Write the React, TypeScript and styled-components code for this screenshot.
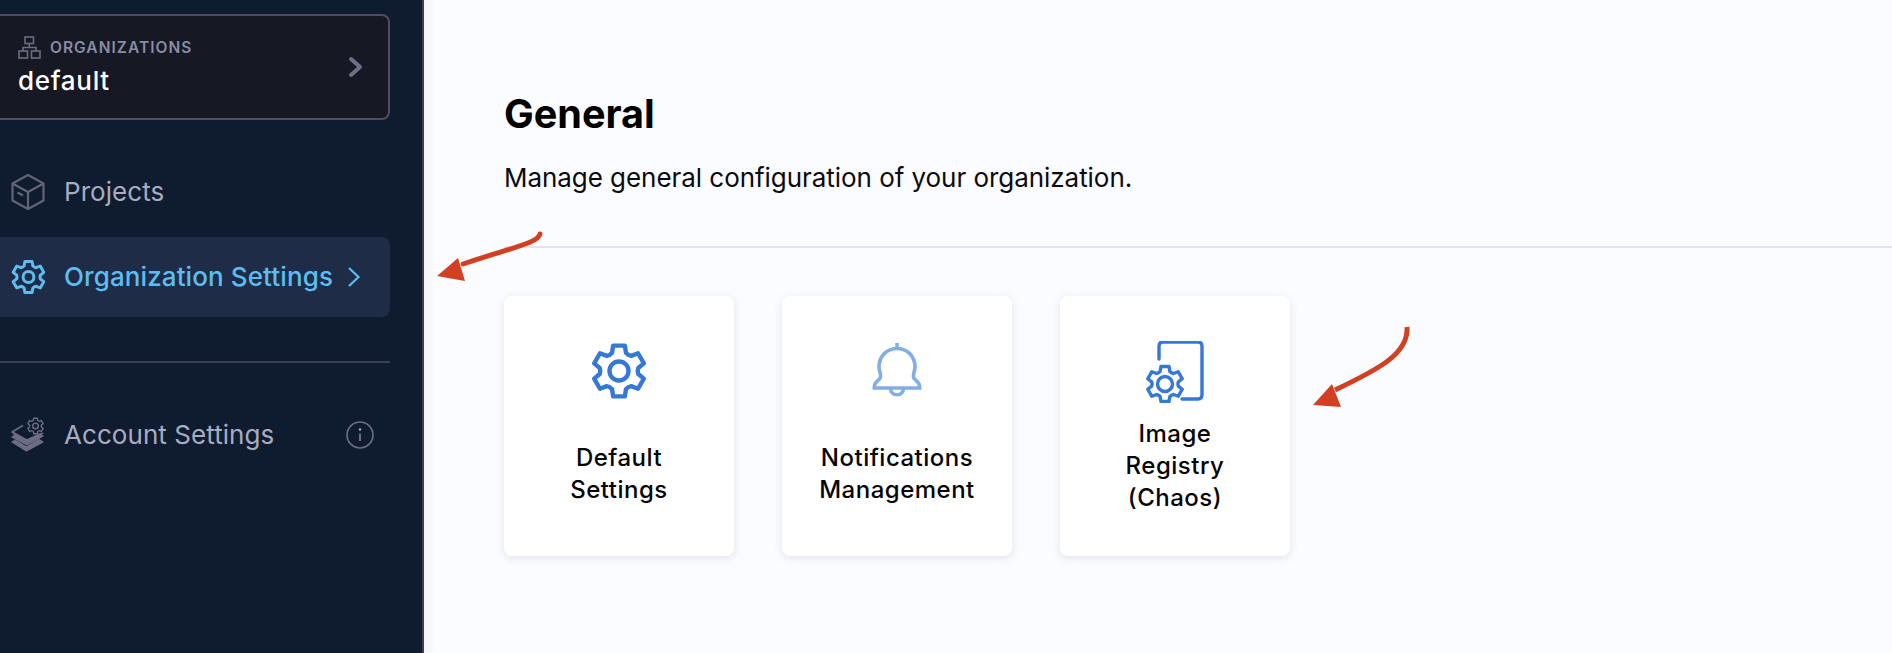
import React from 'react';
import styled, { createGlobalStyle } from 'styled-components';

/* ── helpers ───────────────────────────────────────────── */
const gearPath = (cx: number, cy: number, rO: number, rI: number) => {
  const pt = (r: number, deg: number) => {
    const a = ((deg - 90) * Math.PI) / 180;
    return `${(cx + r * Math.cos(a)).toFixed(2)} ${(cy + r * Math.sin(a)).toFixed(2)}`;
  };
  let d = '';
  for (let i = 0; i < 6; i++) {
    const a = i * 60;
    d += `${i === 0 ? 'M' : 'L'}${pt(rO, a - 13)} L${pt(rO, a + 13)} L${pt(rI, a + 21)} Q${pt(rI * 0.93, a + 30)} ${pt(rI, a + 39)} `;
  }
  return d + 'Z';
};

/* ── page ──────────────────────────────────────────────── */
const Global = createGlobalStyle`
  html, body { margin: 0; height: 100%; overflow: hidden; background: #fbfcff; }
  #root { height: 100%; }
  * { box-sizing: border-box; }
`;

const Page = styled.div`
  position: relative;
  display: flex;
  height: 653px;
  overflow: hidden;
  font-family: Inter, 'Liberation Sans', sans-serif;
`;

/* ── sidebar ───────────────────────────────────────────── */
const Sidebar = styled.aside`
  flex: 0 0 424px;
  min-width: 0;
  padding: 14px 32px 0 0;
  background: #0f1b2e;
  border-right: 2px solid #3b3f4c;
`;

const OrgBox = styled.div`
  display: flex;
  align-items: center;
  justify-content: space-between;
  height: 106px;
  margin-left: -10px;
  padding: 0 24px 1px 26px;
  background: #161823;
  border: 2px solid #4d4f5f;
  border-radius: 8px;
`;

const OrgLabel = styled.div`
  display: flex;
  align-items: center;
  gap: 9px;
  color: #8a8ca3;
  font-size: 15.5px;
  font-weight: 600;
  letter-spacing: 1.05px;
  line-height: 22px;
`;

const OrgName = styled.div`
  margin-top: 6px;
  color: #fff;
  font-size: 26px;
  font-weight: 450;
  letter-spacing: 0.7px;
  line-height: 32px;
`;

const NavRow = styled.div<{ $active?: boolean }>`
  display: flex;
  align-items: center;
  gap: 19px;
  height: 80px;
  padding: 0 16px 0 10px;
  border-radius: 0 8px 8px 0;
  background: ${(p) => (p.$active ? '#1f2c47' : 'transparent')};
  color: ${(p) => (p.$active ? '#5dbdf0' : '#a9abc0')};
  font-size: 26px;
  font-weight: ${(p) => (p.$active ? 500 : 400)};
  letter-spacing: ${(p) => (p.$active ? '0.1px' : '0.06px')};
  line-height: 32px;
`;

const NavIcon = styled.svg`
  flex: none;
  width: 35px;
  height: 38px;
`;

const NavText = styled.span`
  flex: 1;
  white-space: nowrap;
`;

const NavChevron = styled.svg`
  flex: none;
  width: 14px;
  height: 24px;
  margin: 0 13px 0 -5px;
`;

const NavList = styled.nav`
  margin-top: 32px;
  display: flex;
  flex-direction: column;
  gap: 5px;
`;

const SideRule = styled.hr`
  height: 2px;
  margin: 44px 0 32px;
  border: 0;
  background: #3b3f4f;
`;

/* ── main ──────────────────────────────────────────────── */
const Main = styled.main`
  flex: 1;
  min-width: 0;
  padding-top: 87px;
  background: linear-gradient(90deg, #f4f5fa 0, #fbfcff 12px);
`;

const Heading = styled.h1`
  margin: 0 0 0 80px;
  color: #000;
  font-size: 39.6px;
  font-weight: 700;
  line-height: 54px;
`;

const Subtitle = styled.p`
  margin: 19px 0 0 80px;
  color: #0b0b0f;
  font-size: 26px;
  font-weight: 400;
  letter-spacing: -0.05px;
  line-height: 36px;
`;

const Rule = styled.hr`
  height: 2px;
  margin: 50px 0 0 80px;
  border: 0;
  background: #e3e5eb;
`;

const Cards = styled.div`
  display: flex;
  gap: 48px;
  margin: 48px 0 0 80px;
`;

const Card = styled.div`
  width: 230px;
  height: 260px;
  padding-top: 45px;
  display: flex;
  flex-direction: column;
  align-items: center;
  background: #fff;
  border-radius: 8px;
  box-shadow: 0 2px 8px rgba(96, 97, 112, 0.16);
`;

const CardIcon = styled.svg`
  display: block;
  width: 70px;
  height: 62px;
`;

const CardLabel = styled.div<{ $gap: number }>`
  margin-top: ${(p) => p.$gap}px;
  color: #050507;
  font-size: 24px;
  font-weight: 450;
  letter-spacing: 0.5px;
  line-height: 32px;
  text-align: center;
`;

/* ── annotation arrows, drawn over the page ────────────── */
const Arrow = styled.svg<{ $left: number; $top: number; $w: number; $h: number }>`
  position: absolute;
  left: ${(p) => p.$left}px;
  top: ${(p) => p.$top}px;
  width: ${(p) => p.$w}px;
  height: ${(p) => p.$h}px;
`;

const App: React.FC = () => (
  <Page>
    <Global />
    <Sidebar>
      <OrgBox>
        <div>
          <OrgLabel>
            <svg width="23" height="23" viewBox="0 0 23 23" fill="none" stroke="#6b6d82" strokeWidth="1.6">
              <rect x="7" y="1" width="8.5" height="6.5" />
              <rect x="1" y="15" width="8.5" height="7" />
              <rect x="13.5" y="15" width="8.5" height="7" />
              <path d="M11.2 7.5V11.5M5 15V11.5H18V15" />
            </svg>
            ORGANIZATIONS
          </OrgLabel>
          <OrgName>default</OrgName>
        </div>
        <svg width="16" height="22" viewBox="0 0 16 22" fill="none" stroke="#6d6f87" strokeWidth="4" strokeLinecap="round" strokeLinejoin="round">
          <path d="M3 3L12 11L3 19" />
        </svg>
      </OrgBox>

      <NavList>
        <NavRow>
          <NavIcon viewBox="0 0 35 38" fill="none" stroke="#62647a" strokeWidth="2.2" strokeLinejoin="round">
            <path d="M18 2L33.500 10.500V27.500L18 36L2.500 27.500V10.500Z" />
            <path d="M2.500 10.500L18 19L33.500 10.500M18 19V36M7.500 19.500L13 22.500" />
          </NavIcon>
          <NavText>Projects</NavText>
        </NavRow>
        <NavRow $active>
          <NavIcon viewBox="0 0 35 38" fill="none" stroke="#5dbdf0" strokeWidth="3" strokeLinejoin="round">
            <path d={gearPath(18.5, 19, 16, 12)} />
            <circle cx="18.500" cy="19" r="5.400" />
          </NavIcon>
          <NavText>Organization Settings</NavText>
          <NavChevron viewBox="0 0 14 24" fill="none" stroke="#5dbdf0" strokeWidth="2.2">
            <path d="M2 3L11.500 12L2 21" />
          </NavChevron>
        </NavRow>
      </NavList>

      <SideRule />

      <NavRow>
        <NavIcon viewBox="0 0 35 38" fill="none" stroke="#6b6d85" strokeWidth="1.4" strokeLinejoin="round">
          <path d={gearPath(25.5, 10, 8, 6)} />
          <circle cx="25.500" cy="10" r="2.800" />
          <path d="M13 9.500L2 16L17 24.500L33 17" strokeWidth="1.600" />
          <path d="M2.500 16L17 24L30 18L33 20L17 29L2 21L5 19Z" fill="#6b6d85" />
          <path d="M5 24L2 26L16.500 35L33 26L29 23.500L16.500 31Z" fill="#6b6d85" />
        </NavIcon>
        <NavText>Account Settings</NavText>
        <svg width="28" height="28" viewBox="0 0 28 28" fill="none" stroke="#6b6d82" strokeWidth="1.7">
          <circle cx="14" cy="14" r="13" />
          <path d="M14 12.500V20" strokeWidth="2" />
          <circle cx="14" cy="8.500" r="1.200" fill="#a9abc0" stroke="none" />
        </svg>
      </NavRow>
    </Sidebar>

    <Main>
      <Heading>General</Heading>
      <Subtitle>Manage general configuration of your organization.</Subtitle>
      <Rule />
      <Cards>
        <Card>
          <CardIcon viewBox="0 0 70 62" fill="none" stroke="#3578d6" strokeWidth="4.4" strokeLinejoin="round">
            <path d={gearPath(35, 30, 26, 19.5)} />
            <circle cx="35" cy="30" r="9.500" />
          </CardIcon>
          <CardLabel $gap={39}>
            Default
            <br />
            Settings
          </CardLabel>
        </Card>
        <Card>
          <CardIcon viewBox="0 0 70 62" fill="none" stroke="#82ade5" strokeWidth="3.600">
            <path d="M35 2V7.500M17.500 38C20.500 35 17 31 17 26C17 15 25 7.500 35 7.500C45 7.500 53 15 53 26C53 31 49.500 35 52.500 38C56 41.500 57.700 42 57.700 47H12.300C12.300 42 14 41.500 17.500 38Z" />
            <path d="M28.500 47C28.500 56 41.500 56 41.500 47" />
          </CardIcon>
          <CardLabel $gap={39}>
            Notifications
            <br />
            Management
          </CardLabel>
        </Card>
        <Card>
          <CardIcon viewBox="0 0 70 62" fill="none" stroke="#3578d6" strokeWidth="3.400" strokeLinecap="round" strokeLinejoin="round">
            <path d="M19 18V5C19 2.500 20.500 1 23 1H58C60.500 1 62 2.500 62 5V54C62 56.500 60.500 58 58 58H42" />
            <path d={gearPath(25, 43, 18, 13.5)} />
            <circle cx="25" cy="43" r="7.500" />
          </CardIcon>
          <CardLabel $gap={15}>
            Image
            <br />
            Registry
            <br />
            (Chaos)
          </CardLabel>
        </Card>
      </Cards>
    </Main>

    <Arrow $left={430} $top={228} $w={120} $h={60} viewBox="0 0 120 60">
      <path d="M110 6C108 15 84 19 33 36" fill="none" stroke="#d33f22" strokeWidth="5" strokeLinecap="round" />
      <path d="M7 48L28 30L35 53Z" fill="#d33f22" />
    </Arrow>
    <Arrow $left={1305} $top={320} $w={110} $h={95} viewBox="0 0 110 95">
      <path d="M102 7C104 34 72 50 30 70" fill="none" stroke="#d33f22" strokeWidth="5" />
      <path d="M8 85L27 64L36 87Z" fill="#d33f22" />
    </Arrow>
  </Page>
);

export default App;
